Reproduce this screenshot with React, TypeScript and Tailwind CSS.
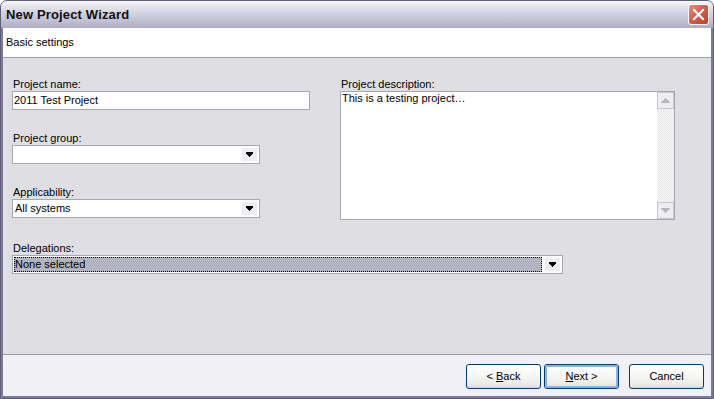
import React from "react";

const font = { fontFamily: '"Liberation Sans", Arial, sans-serif' };

function Arrow({ color = "#000" }: { color?: string }) {
  return (
    <svg width="7" height="5" viewBox="0 0 7 5" shapeRendering="crispEdges">
      <rect x="0" y="0" width="7" height="1" fill={color} />
      <rect x="0" y="1" width="7" height="1" fill={color} />
      <rect x="1" y="2" width="5" height="1" fill={color} />
      <rect x="2" y="3" width="3" height="1" fill={color} />
      <rect x="3" y="4" width="1" height="1" fill={color} />
    </svg>
  );
}

function Combo({ value, width, selected }: { value: string; width: string; selected?: boolean }) {
  return (
    <div className={`${width} h-[19px] border border-[#a4a8b4] bg-white flex items-stretch`}>
      <div className="flex-1 flex items-stretch p-[1px] min-w-0">
        {selected ? (
          <div className="flex-1 bg-[#b2b4bf] border border-dotted border-black flex items-center text-[11px] text-black leading-none">
            {value}
          </div>
        ) : (
          <div className="flex-1 flex items-center pl-[1px] text-[11px] text-black leading-none">{value}</div>
        )}
      </div>
      <div className="w-[17px] m-[1px] bg-[#eeedf2] border border-[#fbfbfc] flex items-center justify-center">
        <Arrow />
      </div>
    </div>
  );
}

function Label({ children }: { children: React.ReactNode }) {
  return <div className="h-[13px] text-[11px] leading-[13px] text-black pl-[1px]">{children}</div>;
}

function Button({ children, focused }: { children: React.ReactNode; focused?: boolean }) {
  return (
    <div
      className="w-[75px] h-[25px] rounded-[3px] border border-[#003c74] flex items-stretch"
      style={{ background: "linear-gradient(to bottom, #ffffff 0%, #f6f6f3 50%, #e9e8e2 90%, #d6d2c6 100%)" }}
    >
      <div
        className={`flex-1 rounded-[2px] flex items-center justify-center text-[11px] text-black ${
          focused ? "border-2 border-[#8faef0]" : ""
        }`}
      >
        {children}
      </div>
    </div>
  );
}

export default function App() {
  return (
    <div className="w-[714px] h-[399px] bg-white" style={font}>
      <div className="w-[714px] h-[399px] flex flex-col rounded-t-[7px] overflow-hidden border border-[#5e5d7a] bg-[#cfcedd]">
        {/* Title bar */}
        <div
          className="h-[27px] shrink-0 flex items-center pl-[5px] pr-[4px]"
          style={{
            background:
              "linear-gradient(to bottom, #fbfbfd 0%, #e9e9f0 15%, #d3d3e0 45%, #c0bfd1 75%, #adacc2 100%)",
          }}
        >
          <div className="flex-1 text-[13px] font-bold text-[#111] leading-none tracking-[0.15px]">
            New Project Wizard
          </div>
          <div
            className="w-[21px] h-[21px] rounded-[3px] border border-white flex items-center justify-center"
            style={{ background: "linear-gradient(135deg, #e98c7c 0%, #d6604c 45%, #bf3b2a 100%)" }}
          >
            <svg width="13" height="13" viewBox="0 0 13 13">
              <path d="M2 2 L11 11 M11 2 L2 11" stroke="#fff" strokeWidth="2.2" strokeLinecap="square" />
            </svg>
          </div>
        </div>

        {/* Body with frame */}
        <div className="flex-1 flex flex-col border-x-[2px] border-b-[2px] border-[#7c7a96]">
          {/* Header */}
          <div className="h-[30px] shrink-0 bg-white border-b border-[#a09fae] flex items-center pl-[3px] text-[11px] text-black">
            Basic settings
          </div>

          {/* Main */}
          <div className="h-[296px] shrink-0 bg-[#dfdfe3] pt-[20px] pl-[9px]">
            <div className="flex">
              <div className="w-[298px] flex flex-col">
                <Label>Project name:</Label>
                <div className="h-[19px] border border-[#a4a8b4] bg-white flex items-center pl-[1px] text-[11px] text-black">
                  2011 Test Project
                </div>
                <div className="mt-[22px]">
                  <Label>Project group:</Label>
                  <Combo value="" width="w-[248px]" />
                </div>
                <div className="mt-[22px]">
                  <Label>Applicability:</Label>
                  <Combo value="All systems" width="w-[248px]" />
                </div>
              </div>
              <div className="ml-[30px] w-[335px] flex flex-col">
                <Label>Project description:</Label>
                <div className="h-[129px] border border-[#a4a8b4] bg-white flex">
                  <div className="flex-1 pl-[1px] text-[11px] text-black leading-[13px]">
                    This is a testing project…
                  </div>
                  <div
                    className="w-[17px] flex flex-col justify-between"
                    style={{
                      backgroundColor: "#f1f1f1",
                      backgroundImage: "repeating-conic-gradient(#e4e4e6 0% 25%, #fafafa 0% 50%)",
                      backgroundSize: "2px 2px",
                    }}
                  >
                    <div className="h-[17px] bg-[#eeedf2] border border-[#c6c6cf] flex items-center justify-center">
                      <svg width="9" height="5" viewBox="0 0 9 5" shapeRendering="crispEdges">
                        <path d="M4 0h1v1h1v1h1v1h1v1h1v1H0V4h1V3h1V2h1V1h1z" fill="#b6b6c2" />
                      </svg>
                    </div>
                    <div className="h-[17px] bg-[#eeedf2] border border-[#c6c6cf] flex items-center justify-center">
                      <svg width="9" height="5" viewBox="0 0 9 5" shapeRendering="crispEdges">
                        <path d="M0 0h9v1H8v1H7v1H6v1H5v1H4V4H3V3H2V2H1V1H0z" fill="#b6b6c2" />
                      </svg>
                    </div>
                  </div>
                </div>
              </div>
            </div>
            <div className="mt-[22px]">
              <Label>Delegations:</Label>
              <Combo value="None selected" width="w-[551px]" selected />
            </div>
          </div>

          {/* Footer */}
          <div className="flex-1 bg-[#f1f0f5] border-t border-[#9a98aa] flex items-start pt-[9px] pl-[463px]">
            <Button>
              &lt; <span className="underline ml-[3px]">B</span>ack
            </Button>
            <div className="ml-[3px]">
              <Button focused>
                <span className="underline">N</span>ext &gt;
              </Button>
            </div>
            <div className="ml-[10px]">
              <Button>Cancel</Button>
            </div>
          </div>
        </div>
      </div>
    </div>
  );
}
